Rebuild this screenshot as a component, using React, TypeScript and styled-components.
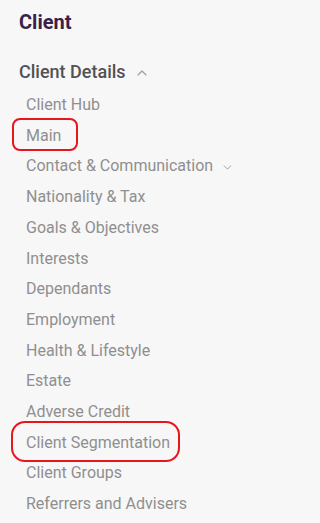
import React from 'react';
import styled, { createGlobalStyle } from 'styled-components';
import { ChevronUp, ChevronDown } from 'lucide-react';

const GlobalStyle = createGlobalStyle`
  html, body {
    margin: 0;
    padding: 0;
    background: #f7f7f7;
  }
  body {
    font-family: Roboto, "Liberation Sans", Arial, sans-serif;
  }
`;

const Sidebar = styled.nav`
  width: 251px;
  min-height: 523px;
  box-sizing: border-box;
  padding: 10px 0 0 19px;
  background: #f7f7f7;
`;

const Title = styled.h1`
  margin: 0;
  font-size: 20px;
  line-height: 24px;
  font-weight: 700;
  color: #3c1f4c;
`;

const SectionHeader = styled.div`
  display: flex;
  align-items: center;
  gap: 8px;
  margin-top: 26px;
  font-size: 18px;
  line-height: 24px;
  font-weight: 500;
  color: #525252;

  svg {
    margin-top: 1px;
  }
`;

const List = styled.ul`
  list-style: none;
  margin: 6px 0 0;
  padding: 0 0 0 7px;
`;

const Item = styled.li`
  position: relative;
  display: flex;
  align-items: center;
  gap: 8px;
  font-size: 16px;
  line-height: 30.7px;
  color: #8f8f8f;
  white-space: nowrap;

  svg {
    margin-top: 2px;
  }
`;

const Highlight = styled.span<{ $top: number; $left: number; $width: number; $height: number; $radius: number }>`
  position: absolute;
  top: ${(p) => p.$top}px;
  left: ${(p) => p.$left}px;
  width: ${(p) => p.$width}px;
  height: ${(p) => p.$height}px;
  box-sizing: border-box;
  border: 2.5px solid #e8141e;
  border-radius: ${(p) => p.$radius}px;
  pointer-events: none;
`;

type NavItem = {
  label: string;
  expandable?: boolean;
  highlight?: { top: number; left: number; width: number; height: number; radius: number };
};

const items: NavItem[] = [
  { label: 'Client Hub' },
  { label: 'Main', highlight: { top: -3, left: -14, width: 66, height: 33, radius: 8 } },
  { label: 'Contact & Communication', expandable: true },
  { label: 'Nationality & Tax' },
  { label: 'Goals & Objectives' },
  { label: 'Interests' },
  { label: 'Dependants' },
  { label: 'Employment' },
  { label: 'Health & Lifestyle' },
  { label: 'Estate' },
  { label: 'Adverse Credit' },
  { label: 'Client Segmentation', highlight: { top: -7, left: -15, width: 169, height: 41, radius: 14 } },
  { label: 'Client Groups' },
  { label: 'Referrers and Advisers' },
];

const App: React.FC = () => {
  return (
    <>
      <GlobalStyle />
      <Sidebar>
        <Title>Client</Title>
        <SectionHeader>
          Client Details
          <ChevronUp size={16} strokeWidth={1.6} color="#9a9a9a" />
        </SectionHeader>
        <List>
          {items.map((item) => (
            <Item key={item.label}>
              {item.label}
              {item.expandable && <ChevronDown size={13} strokeWidth={1.8} color="#9a9a9a" />}
              {item.highlight && (
                <Highlight
                  $top={item.highlight.top}
                  $left={item.highlight.left}
                  $width={item.highlight.width}
                  $height={item.highlight.height}
                  $radius={item.highlight.radius}
                />
              )}
            </Item>
          ))}
        </List>
      </Sidebar>
    </>
  );
};

export default App;
